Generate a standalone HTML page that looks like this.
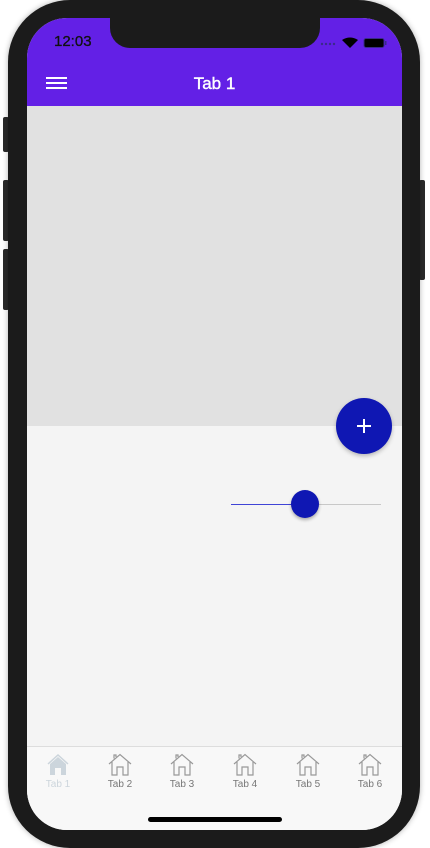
<!DOCTYPE html>
<html><head><meta charset="utf-8"><style>
*{margin:0;padding:0;box-sizing:border-box}
body{width:430px;height:848px;background:#fff;position:relative;overflow:hidden;font-family:"Liberation Sans",sans-serif}
.btn{position:absolute;background:#2a2a2a;border-radius:2px}
.phone{position:absolute;left:8px;top:0;width:412px;height:848px;background:#1b1b1b;border-radius:62px;box-shadow:0 0 6px rgba(0,0,0,.3)}
.screen{position:absolute;left:27px;top:18px;width:375px;height:812px;border-radius:40px;overflow:hidden;background:#f4f4f4}
.hdr{position:absolute;left:0;top:0;width:375px;height:88px;background:#6320e6}
.notch{position:absolute;left:83px;top:0;width:210px;height:30px;background:#1b1b1b;border-radius:0 0 20px 20px}
.time{position:absolute;left:27px;top:15px;font-size:15px;font-weight:500;color:#111;-webkit-text-stroke:0.3px #111}
.title{position:absolute;left:0;width:375px;top:56px;text-align:center;color:#fff;font-size:17px;-webkit-text-stroke:0.4px #fff}
.gray{position:absolute;left:0;top:88px;width:375px;height:320px;background:#e1e1e1}
.fab{position:absolute;left:309px;top:380px;width:56px;height:56px;border-radius:50%;background:#0f17b3;box-shadow:0 2px 4px rgba(0,0,0,.25)}
.tab{position:absolute;left:0;top:728px;width:375px;height:84px;background:#f8f8f8;border-top:1px solid #ddd}
.t{position:absolute;top:6px;width:62px;text-align:center;font-size:10px;color:#777}
.t svg{display:block;margin:0 auto 2px}
</style></head><body>
<div class="btn" style="left:3px;top:117px;width:6px;height:35px"></div>
<div class="btn" style="left:3px;top:180px;width:6px;height:61px"></div>
<div class="btn" style="left:3px;top:249px;width:6px;height:61px"></div>
<div class="btn" style="left:419px;top:180px;width:6px;height:100px"></div>
<div class="phone"></div>
<div class="screen">
<div class="hdr">
<div class="notch"></div>
<div class="time">12:03</div>
<svg style="position:absolute;left:293px;top:18px" width="70" height="14">
<g fill="#3a2a8a"><circle cx="2" cy="8" r="1.2"/><circle cx="6" cy="8" r="1.2"/><circle cx="10" cy="8" r="1.2"/><circle cx="14" cy="8" r="1.2"/></g>
<path d="M22 4 Q30 -1 38 4 L30 12 Z" fill="#000"/>
<rect x="44" y="2.5" width="20" height="9" rx="2" fill="#000" stroke="#3a2a8a"/>
<rect x="65" y="5" width="1.5" height="4" fill="#3a2a8a"/>
</svg>
<svg style="position:absolute;left:19px;top:58px" width="22" height="14"><g stroke="#fff" stroke-width="2"><line x1="0" y1="2" x2="21" y2="2"/><line x1="0" y1="7" x2="21" y2="7"/><line x1="0" y1="12" x2="21" y2="12"/></g></svg>
<div class="title">Tab 1</div>
</div>
<div class="gray"></div>
<div class="fab"><svg width="56" height="56"><g stroke="#fff" stroke-width="2"><line x1="21" y1="28" x2="35" y2="28"/><line x1="28" y1="21" x2="28" y2="35"/></g></svg></div>
<div style="position:absolute;left:204px;top:486px;width:74px;height:1px;background:#3f44d6"></div>
<div style="position:absolute;left:278px;top:486px;width:76px;height:1px;background:#c8c8c8"></div>
<div style="position:absolute;left:264px;top:472px;width:28px;height:28px;border-radius:50%;background:#0f17b3;box-shadow:0 2px 3px rgba(0,0,0,.3)"></div>
<div class="tab">
<div class="t" style="left:0;color:#ccd5dc"><svg width="24" height="24" viewBox="0 0 24 24"><path d="M2 11 L12 2 L22 11" fill="none" stroke="#ccd5dc" stroke-width="1.5"/><path d="M4 11 L12 4 L20 11 V22 H15 V15 H9 V22 H4 Z" fill="#ccd5dc"/></svg>Tab 1</div>
<div class="t" style="left:62px"><svg width="24" height="24" viewBox="0 0 24 24" fill="none" stroke="#999" stroke-width="1.2"><path d="M1 11 L12 1.5 L23 11"/><path d="M4 9 V22 H9 V14 H15 V22 H20 V9"/><path d="M6 5.5 V2 H8 V4"/></svg>Tab 2</div>
<div class="t" style="left:124px"><svg width="24" height="24" viewBox="0 0 24 24" fill="none" stroke="#999" stroke-width="1.2"><path d="M1 11 L12 1.5 L23 11"/><path d="M4 9 V22 H9 V14 H15 V22 H20 V9"/><path d="M6 5.5 V2 H8 V4"/></svg>Tab 3</div>
<div class="t" style="left:187px"><svg width="24" height="24" viewBox="0 0 24 24" fill="none" stroke="#999" stroke-width="1.2"><path d="M1 11 L12 1.5 L23 11"/><path d="M4 9 V22 H9 V14 H15 V22 H20 V9"/><path d="M6 5.5 V2 H8 V4"/></svg>Tab 4</div>
<div class="t" style="left:250px"><svg width="24" height="24" viewBox="0 0 24 24" fill="none" stroke="#999" stroke-width="1.2"><path d="M1 11 L12 1.5 L23 11"/><path d="M4 9 V22 H9 V14 H15 V22 H20 V9"/><path d="M6 5.5 V2 H8 V4"/></svg>Tab 5</div>
<div class="t" style="left:312px"><svg width="24" height="24" viewBox="0 0 24 24" fill="none" stroke="#999" stroke-width="1.2"><path d="M1 11 L12 1.5 L23 11"/><path d="M4 9 V22 H9 V14 H15 V22 H20 V9"/><path d="M6 5.5 V2 H8 V4"/></svg>Tab 6</div>
<div style="position:absolute;left:121px;top:70px;width:134px;height:5px;border-radius:3px;background:#000"></div>
</div>
</div>
</body></html>
